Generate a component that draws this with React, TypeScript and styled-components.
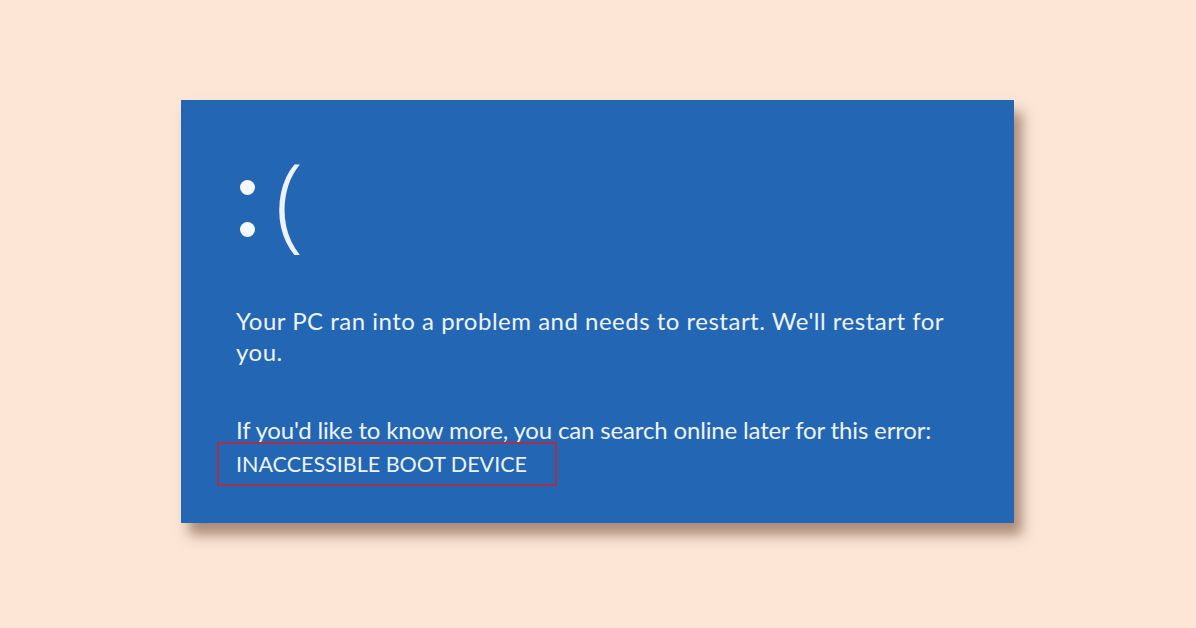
import React from "react";
import styled, { createGlobalStyle } from "styled-components";

const Global = createGlobalStyle`
  html, body { margin: 0; padding: 0; background: #fde6d6; }
  #root { width: 1196px; height: 628px; }
`;

const Page = styled.div`
  width: 1196px;
  height: 628px;
  box-sizing: border-box;
  padding: 100px 0 0 181px;
  background: #fde6d6;
`;

const Screen = styled.div`
  width: 833px;
  height: 423px;
  box-sizing: border-box;
  background: #2366b4;
  padding: 0 0 0 55px;
  display: flex;
  flex-direction: column;
  color: #eef3fb;
  font-family: Lato, "Open Sans", sans-serif;
  box-shadow: 8px 12px 12px rgba(90, 50, 30, 0.5);
`;

const Face = styled.div`
  font-family: "Open Sans", Lato, sans-serif;
  font-weight: 300;
  font-size: 104px;
  line-height: 1;
  margin-top: 42px;
  height: 120px;
  display: flex;
  align-items: center;
  gap: 20px;
`;

const Colon = styled.span`
  display: flex;
  flex-direction: column;
  gap: 27px;
  margin-left: 4px;
  margin-top: 12px;
`;

const Dot = styled.span`
  width: 15px;
  height: 15px;
  border-radius: 50%;
  background: #f4f7fc;
`;

const Paren = styled.span`
  display: block;
  margin-top: -6px;
`;

const Message = styled.p`
  margin: 43px 0 0;
  font-size: 24px;
  line-height: 31px;
  letter-spacing: 0.5px;
  width: 730px;
`;

const Info = styled.p`
  margin: 46px 0 0;
  font-size: 24px;
  line-height: 33px;
  letter-spacing: -0.15px;
`;

const Code = styled.span`
  display: inline-block;
  position: relative;
  font-size: 21.5px;
  letter-spacing: 0;
`;

const Highlight = styled.span`
  position: absolute;
  left: -19px;
  top: -6px;
  width: 340px;
  height: 44px;
  box-sizing: border-box;
  border: 2px solid #a8304a;
  pointer-events: none;
`;

export default function App() {
  return (
    <>
      <Global />
      <Page>
        <Screen>
          <Face>
            <Colon>
              <Dot />
              <Dot />
            </Colon>
            <Paren>(</Paren>
          </Face>
          <Message>
            Your PC ran into a problem and needs to restart. We'll restart for you.
          </Message>
          <Info>
            If you'd like to know more, you can search online later for this error:
            <br />
            <Code>
              INACCESSIBLE BOOT DEVICE
              <Highlight />
            </Code>
          </Info>
        </Screen>
      </Page>
    </>
  );
}
